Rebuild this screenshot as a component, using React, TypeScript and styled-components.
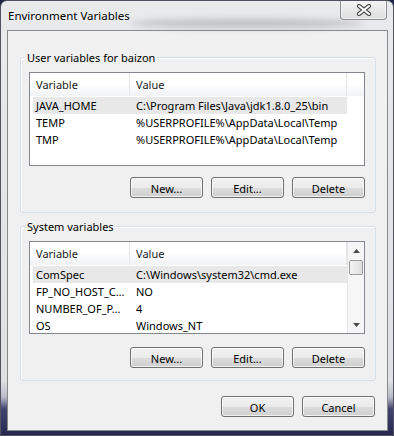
import styled, { createGlobalStyle } from 'styled-components';

const GlobalStyle = createGlobalStyle`
  html, body {
    margin: 0;
    padding: 0;
    background: #1f2249;
  }
  body {
    font-family: 'Noto Sans', 'Segoe UI', sans-serif;
    font-size: 11px;
    color: #000;
  }
  * { box-sizing: border-box; }
`;

type Row = { name: string; value: string; selected?: boolean };

const userVars: Row[] = [
  { name: 'JAVA_HOME', value: 'C:\\Program Files\\Java\\jdk1.8.0_25\\bin', selected: true },
  { name: 'TEMP', value: '%USERPROFILE%\\AppData\\Local\\Temp' },
  { name: 'TMP', value: '%USERPROFILE%\\AppData\\Local\\Temp' },
];

const systemVars: Row[] = [
  { name: 'ComSpec', value: 'C:\\Windows\\system32\\cmd.exe', selected: true },
  { name: 'FP_NO_HOST_C…', value: 'NO' },
  { name: 'NUMBER_OF_P…', value: '4' },
  { name: 'OS', value: 'Windows_NT' },
];

const Window = styled.div`
  position: relative;
  width: 394px;
  height: 436px;
  border: 1px solid #50535e;
  border-radius: 7px 7px 0 0;
  background: linear-gradient(
    to bottom,
    #e9eaec 0px,
    #dfe0e3 380px,
    #b9bbc9 396px,
    #40446f 408px,
    #23274f 436px
  );
  display: flex;
  flex-direction: column;
  overflow: hidden;
`;

// blurred glass reflection behind the title
const Smudge = styled.div`
  position: absolute;
  left: 130px;
  top: 18px;
  width: 232px;
  height: 9px;
  border-radius: 50%;
  background: rgba(100, 100, 100, 0.3);
  filter: blur(3px);
`;

const TitleBar = styled.div`
  position: relative;
  height: 29px;
  display: flex;
  align-items: flex-start;
  padding: 0 6px 0 7px;
`;

const Title = styled.div`
  flex: 1;
  margin-top: 7px;
  font-size: 11.5px;
  line-height: 16px;
  text-shadow: 0 0 6px rgba(255, 255, 255, 0.9);
`;

const CloseButton = styled.div`
  width: 47px;
  height: 20px;
  margin-top: -1px;
  border: 1px solid #8e8e8e;
  border-top: none;
  border-radius: 0 0 4px 4px;
  background: linear-gradient(to bottom, #f3f3f3, #dedede);
  box-shadow: inset 0 0 0 1px rgba(255, 255, 255, 0.6);
  display: flex;
  align-items: center;
  justify-content: center;
`;

const Client = styled.div`
  width: 381px;
  height: 401px;
  margin-left: 6px;
  border: 1px solid #8a8a8a;
  background: #f0f0f0;
  display: flex;
  flex-direction: column;
  align-items: flex-start;
`;

const Group = styled.div<{ $top: number; $bottom: number }>`
  position: relative;
  width: 356px;
  margin: ${(p) => p.$top}px 0 0 12px;
  padding: 14px 10px ${(p) => p.$bottom}px 8px;
  border: 1px solid #d5dfe5;
  border-radius: 3px;
  box-shadow: inset 1px 1px 0 #fff;
`;

const Caption = styled.div`
  position: absolute;
  top: -8px;
  left: 4px;
  padding: 1px 2px 0;
  line-height: 14px;
  background: #f0f0f0;
`;

const ListView = styled.div<{ $height: number }>`
  width: 336px;
  height: ${(p) => p.$height}px;
  border: 1px solid #828790;
  background: #fff;
  display: flex;
  overflow: hidden;
`;

const ListBody = styled.div`
  flex: 1;
  min-width: 0;
`;

const Header = styled.div`
  display: flex;
  height: 23px;
  background: linear-gradient(to bottom, #fff 0%, #fff 45%, #f1f2f4 100%);
`;

const HeaderCell = styled.div<{ $width?: number }>`
  ${(p) => (p.$width ? `width: ${p.$width}px;` : 'flex: 1;')}
  padding: 2px 0 0 6px;
  line-height: 20px;
  border-right: 1px solid #e3e5e8;
  white-space: nowrap;
  overflow: hidden;
  color: #1c1c1c;
`;

const Filler = styled.div`
  flex: 1;
`;

const Rows = styled.div`
  padding-top: 1px;
`;

const RowLine = styled.div<{ $selected?: boolean }>`
  display: flex;
  width: 314px;
  height: 17px;
  margin-left: 3px;
  padding-top: 1px;
  line-height: 16px;
  background: ${(p) => (p.$selected ? '#e8e8e8' : 'transparent')};
`;

const NameCell = styled.div`
  width: 97px;
  padding-left: 3px;
  white-space: nowrap;
  overflow: hidden;
`;

const ValueCell = styled.div`
  flex: 1;
  padding-left: 6px;
  white-space: nowrap;
  overflow: hidden;
`;

const ScrollBar = styled.div`
  width: 17px;
  display: flex;
  flex-direction: column;
  background: #f6f6f6;
  border-left: 1px solid #e6e6e6;
`;

const ArrowButton = styled.div`
  height: 17px;
  display: flex;
  align-items: center;
  justify-content: center;
`;

const Thumb = styled.div`
  height: 15px;
  margin: 1px 1px 0 1px;
  border: 1px solid #9b9b9b;
  border-radius: 2px;
  background: linear-gradient(to right, #f4f4f4, #dedede);
`;

const Track = styled.div`
  flex: 1;
`;

const ButtonRow = styled.div<{ $top: number; $right?: number }>`
  display: flex;
  justify-content: flex-end;
  gap: 8px;
  margin-top: ${(p) => p.$top}px;
  padding-right: ${(p) => p.$right ?? 0}px;
  align-self: stretch;
`;

const Button = styled.button`
  width: 73px;
  height: 21px;
  padding: 1px 0 0;
  border: 1px solid #707070;
  border-radius: 3px;
  background: linear-gradient(
    to bottom,
    #f2f2f2 0%,
    #ebebeb 50%,
    #dddddd 50%,
    #cfcfcf 100%
  );
  box-shadow: inset 0 0 0 1px rgba(255, 255, 255, 0.7);
  font-family: inherit;
  font-size: 11px;
  color: #000;
  line-height: 17px;
`;

const Arrow = ({ up }: { up?: boolean }) => (
  <svg width="7" height="4" viewBox="0 0 7 4">
    <path d={up ? 'M0 4 L3.5 0 L7 4 Z' : 'M0 0 L3.5 4 L7 0 Z'} fill="#4a4a4a" />
  </svg>
);

const CloseGlyph = () => (
  <svg width="16" height="12" viewBox="0 0 16 12">
    <path d="M3 2 L13 10 M13 2 L3 10" stroke="#4b4b4b" strokeWidth="4.2" strokeLinecap="round" />
    <path d="M3 2 L13 10 M13 2 L3 10" stroke="#fff" strokeWidth="2" strokeLinecap="round" />
  </svg>
);

const VarList = ({ rows, height, scroll }: { rows: Row[]; height: number; scroll?: boolean }) => (
  <ListView $height={height}>
    <ListBody>
      <Header>
        <HeaderCell $width={100}>Variable</HeaderCell>
        <HeaderCell $width={217}>Value</HeaderCell>
        <Filler />
      </Header>
      <Rows>
        {rows.map((r) => (
          <RowLine key={r.name} $selected={r.selected}>
            <NameCell>{r.name}</NameCell>
            <ValueCell>{r.value}</ValueCell>
          </RowLine>
        ))}
      </Rows>
    </ListBody>
    {scroll && (
      <ScrollBar>
        <ArrowButton>
          <Arrow up />
        </ArrowButton>
        <Thumb />
        <Track />
        <ArrowButton>
          <Arrow />
        </ArrowButton>
      </ScrollBar>
    )}
  </ListView>
);

export default () => (
  <>
    <GlobalStyle />
    <Window>
      <Smudge />
      <TitleBar>
        <Title>Environment Variables</Title>
        <CloseButton>
          <CloseGlyph />
        </CloseButton>
      </TitleBar>
      <Client>
        <Group $top={26} $bottom={14}>
          <Caption>User variables for baizon</Caption>
          <VarList rows={userVars} height={94} />
          <ButtonRow $top={11}>
            <Button>New...</Button>
            <Button>Edit...</Button>
            <Button>Delete</Button>
          </ButtonRow>
        </Group>
        <Group $top={13} $bottom={12}>
          <Caption>System variables</Caption>
          <VarList rows={systemVars} height={93} scroll />
          <ButtonRow $top={13}>
            <Button>New...</Button>
            <Button>Edit...</Button>
            <Button>Delete</Button>
          </ButtonRow>
        </Group>
        <ButtonRow $top={15} $right={12}>
          <Button>OK</Button>
          <Button>Cancel</Button>
        </ButtonRow>
      </Client>
    </Window>
  </>
);
